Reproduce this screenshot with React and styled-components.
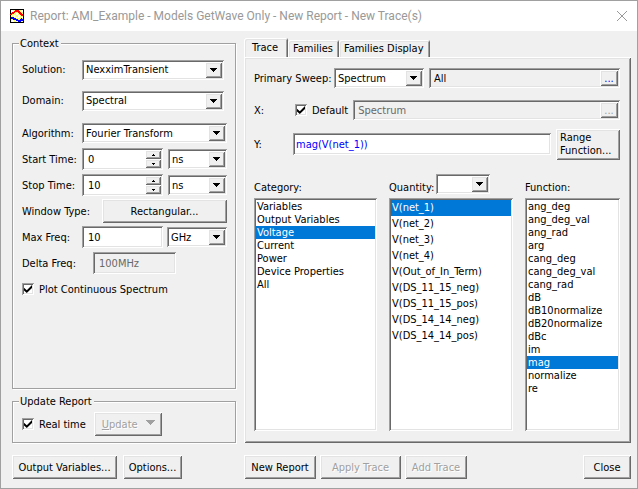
import React, { useState } from "react";
import styled, { createGlobalStyle, css } from "styled-components";

const FACE = "#f0f0f0";
const SHADOW = "#a0a0a0";
const DARK = "#696969";
const LIGHT = "#e3e3e3";

const sunken = css`
  box-shadow: inset 1px 1px ${SHADOW}, inset -1px -1px #fff,
    inset 2px 2px ${DARK}, inset -2px -2px ${LIGHT};
`;

const raised = css`
  box-shadow: inset 1px 1px #fff, inset -1px -1px ${DARK},
    inset 2px 2px ${LIGHT}, inset -2px -2px ${SHADOW};
`;

const GlobalStyle = createGlobalStyle`
  * {
    box-sizing: border-box;
  }
  body {
    margin: 0;
    background: ${FACE};
  }
  body, button, input, select {
    font-family: "DejaVu Sans Condensed", "DejaVu Sans", sans-serif;
    font-size: 11px;
    line-height: 13px;
    color: #000;
  }
`;

const Dialog = styled.div`
  display: flex;
  flex-direction: column;
  min-height: 100vh;
  border: 1px solid ${SHADOW};
  background: ${FACE};
  white-space: nowrap;
`;

const TitleBar = styled.header`
  display: flex;
  align-items: center;
  gap: 6px;
  height: 30px;
  padding: 0 9px;
  background: #fff;
`;

const Title = styled.h1`
  flex: 1;
  margin: 0;
  font-family: Roboto, sans-serif;
  font-size: 12px;
  font-weight: normal;
  line-height: 16px;
  color: #999;
`;

const CloseIcon = styled.button`
  display: flex;
  padding: 0;
  border: 0;
  background: none;
`;

const Body = styled.form`
  flex: 1;
  display: grid;
  grid-template-columns: 224px 1fr;
  grid-template-rows: 1fr auto;
  gap: 12px 8px;
  padding: 6px 6px 9px 11px;
`;

const Column = styled.div`
  display: flex;
  flex-direction: column;
  gap: 6px;
`;

const Group = styled.fieldset`
  flex: ${({ $grow }) => ($grow ? 1 : "none")};
  min-width: 0;
  margin: 0;
  padding: 4px 8px 6px 9px;
  border: 1px solid ${SHADOW};
  box-shadow: 1px 1px #fff, inset 1px 1px #fff;
`;

const Legend = styled.legend`
  margin-left: -3px;
  padding: 0 2px 0 1px;
  background: ${FACE};
`;

const FieldBlock = styled.div`
  & + & {
    margin-top: 4px;
  }
`;

const FieldRow = styled.div`
  display: flex;
  align-items: center;
  gap: 4px;
  height: ${({ $tall }) => ($tall ? 31 : 26)}px;
`;

const FieldLabel = styled.label`
  flex: none;
  width: ${({ $width }) => $width || 56}px;
  color: #000;
`;

const SelectBox = styled.span`
  display: grid;
  flex: ${({ $width }) => ($width ? "none" : 1)};
  width: ${({ $width }) => ($width ? `${$width}px` : "auto")};
  height: 20px;
  margin-right: ${({ $inset }) => $inset || 0}px;
  padding: 2px;
  background: #fff;
  ${sunken}
`;

const NativeSelect = styled.select`
  grid-area: 1 / 1;
  min-width: 0;
  padding: 0 16px 0 2px;
  border: 0;
  background: none;
  appearance: none;
`;

const Arrow = styled.span`
  grid-area: 1 / 1;
  justify-self: end;
  display: flex;
  align-items: center;
  justify-content: center;
  width: 17px;
  background: ${FACE};
  pointer-events: none;
  ${raised}
`;

const TextInput = styled.input`
  flex: ${({ $width }) => ($width ? "none" : 1)};
  width: ${({ $width }) => ($width ? `${$width}px` : "auto")};
  min-width: 0;
  height: 22px;
  padding: 2px 6px;
  border: 0;
  background: #fff;
  ${sunken}

  &:disabled {
    background: ${FACE};
    color: ${DARK};
  }
`;

const FormulaInput = styled(TextInput)`
  padding: 2px 3px;
  color: #00f;
`;

const SpinBox = styled.span`
  display: flex;
  width: 81px;
  height: 22px;
  margin-right: 1px;
  padding: 2px;
  background: #fff;
  ${sunken}
`;

const SpinInput = styled.input`
  flex: 1;
  min-width: 0;
  padding: 0 4px;
  border: 0;
  background: none;
`;

const SpinButtons = styled.span`
  display: flex;
  flex-direction: column;
  width: 16px;
`;

const SpinButton = styled.button`
  flex: 1;
  display: flex;
  align-items: center;
  justify-content: center;
  padding: 0;
  border: 0;
  background: ${FACE};
  ${raised}
`;

const Button = styled.button`
  flex: ${({ $grow }) => ($grow ? 1 : "none")};
  width: ${({ $width }) => ($width ? `${$width}px` : "auto")};
  min-height: 24px;
  padding: 0 4px;
  border: 0;
  background: ${FACE};
  ${raised}

  &:disabled {
    color: ${SHADOW};
    text-shadow: 1px 1px #fff;
  }
`;

const RangeButton = styled(Button)`
  height: 31px;
  padding: 0 4px;
  text-align: left;
  white-space: normal;
`;

const UpdateButton = styled(Button)`
  display: flex;
  align-items: center;
  justify-content: space-between;
  padding: 0 7px 0 8px;

  svg {
    margin-bottom: 4px;
  }
`;

const CheckLabel = styled.label`
  display: flex;
  align-items: center;
  gap: 5px;
`;

const Checkbox = styled.input`
  display: grid;
  place-content: center;
  width: 12px;
  height: 12px;
  margin: 0;
  background: #fff;
  appearance: none;
  ${sunken}

  &:checked::before {
    content: "";
    width: 8px;
    height: 8px;
    background: #000;
    clip-path: polygon(0 35%, 35% 65%, 100% 0, 100% 38%, 35% 100%, 0 70%);
  }
`;

const UpdateRow = styled.div`
  display: flex;
  align-items: center;
  gap: 8px;
`;

const TabArea = styled.div`
  display: flex;
  flex-direction: column;
  min-width: 0;
`;

const TabList = styled.div`
  display: flex;
  align-items: flex-end;
  height: 20px;
`;

const Tab = styled.button`
  height: ${({ $active }) => ($active ? 21 : 17)}px;
  margin-bottom: ${({ $active }) => ($active ? -2 : 0)}px;
  padding: ${({ $active }) => ($active ? "0 10px 3px 8px" : "0 6px 0 5px")};
  border: 0;
  border-radius: 2px 2px 0 0;
  background: ${FACE};
  box-shadow: inset 1px 1px #fff, inset -1px 0 ${DARK}, inset 2px 2px ${LIGHT},
    inset -2px 0 ${SHADOW};
`;

const TabPanel = styled.section`
  flex: 1;
  display: flex;
  flex-direction: column;
  padding: 5px 11px 12px 10px;
  ${raised}
`;

const TraceRow = styled.div`
  display: flex;
  align-items: center;
  gap: 5px;
  height: ${({ $tall }) => ($tall ? 36 : 32)}px;
`;

const SweepBox = styled.span`
  flex: 1;
  display: flex;
  align-items: center;
  height: 20px;
  padding: 2px;
  ${sunken}
`;

const SweepValue = styled.input`
  flex: 1;
  min-width: 0;
  padding: 0 3px;
  border: 0;
  background: none;

  &:disabled {
    color: ${DARK};
  }
`;

const MoreButton = styled.button`
  align-self: stretch;
  width: 18px;
  padding: 0;
  border: 0;
  background: ${FACE};
  color: #00f;
  ${raised}

  &:disabled {
    color: ${SHADOW};
  }
`;

const Lists = styled.div`
  flex: 1;
  display: grid;
  grid-template-columns: 123fr 124fr 95fr;
  gap: 12px;
  padding-top: 12px;
`;

const ListColumn = styled.div`
  display: flex;
  flex-direction: column;
  gap: 4px;
  min-width: 0;
`;

const ListHeader = styled.div`
  display: flex;
  align-items: flex-end;
  gap: 2px;
  height: 20px;
`;

const ListBox = styled.ul`
  flex: 1;
  margin: 0;
  padding: 2px;
  background: #fff;
  list-style: none;
  ${sunken}
`;

const ListItem = styled.li`
  padding-left: 1px;
  line-height: ${({ $height }) => $height}px;
  background: ${({ $selected }) => ($selected ? "#0078d7" : "transparent")};
  color: ${({ $selected }) => ($selected ? "#fff" : "#000")};
  cursor: default;
`;

const Footer = styled.footer`
  display: flex;
  gap: ${({ $gap }) => $gap}px;
`;

const Spacer = styled.span`
  flex: 1;
`;

const categories = [
  "Variables",
  "Output Variables",
  "Voltage",
  "Current",
  "Power",
  "Device Properties",
  "All",
];

const quantities = [
  "V(net_1)",
  "V(net_2)",
  "V(net_3)",
  "V(net_4)",
  "V(Out_of_In_Term)",
  "V(DS_11_15_neg)",
  "V(DS_11_15_pos)",
  "V(DS_14_14_neg)",
  "V(DS_14_14_pos)",
];

const functions = [
  "ang_deg",
  "ang_deg_val",
  "ang_rad",
  "arg",
  "cang_deg",
  "cang_deg_val",
  "cang_rad",
  "dB",
  "dB10normalize",
  "dB20normalize",
  "dBc",
  "im",
  "mag",
  "normalize",
  "re",
];

const ReportIcon = () => (
  <svg width="14" height="14" viewBox="0 0 14 14" shapeRendering="crispEdges" aria-hidden="true">
    <rect width="14" height="14" fill="#000" />
    <rect x="1" y="1" width="12" height="12" fill="#ff6" />
    <path d="M1 1h2v2h-2zM11 1h2v2h-2zM6 4h2v2h-2zM3 6h2v2h-2zM8 6h2v3h-2zM5 8h2v1h-2zM11 8h2v1h-2zM2 11h2v2h-2zM6 12h2v1h-2z" fill="#fff" />
    <path d="M1 4h1v-1h2v-1h1v-1h4v1h1v1h1v1h1v1h1v2h-2v-1h-1v-1h-1v-1h-1v-1h-3v1h-1v1h-2v1h-2z" fill="#f00" />
    <path d="M1 8h3v1h2v1h2v1h2v-1h1v-1h1v1h1v2h-2v1h-3v-1h-2v-1h-3v-1h-2z" fill="#00f" />
  </svg>
);

const Triangle = ({ size = 4, up, color = "#000" }) => (
  <svg
    width={size * 2 - 1}
    height={size}
    viewBox={`0 0 ${size * 2 - 1} ${size}`}
    shapeRendering="crispEdges"
    aria-hidden="true"
  >
    {Array.from({ length: size }, (_, i) => (
      <rect key={i} x={i} y={up ? size - 1 - i : i} width={(size - i) * 2 - 1} height="1" fill={color} />
    ))}
  </svg>
);

const Select = ({ id, label, options, width, inset }) => (
  <SelectBox $width={width} $inset={inset}>
    <NativeSelect id={id} aria-label={label}>
      {options.map((option) => (
        <option key={option}>{option}</option>
      ))}
    </NativeSelect>
    <Arrow>
      <Triangle />
    </Arrow>
  </SelectBox>
);

const Spinner = ({ id, initial }) => {
  const [value, setValue] = useState(initial);
  return (
    <SpinBox>
      <SpinInput id={id} value={value} onChange={(e) => setValue(Number(e.target.value) || 0)} />
      <SpinButtons>
        <SpinButton type="button" aria-label="Increase" onClick={() => setValue(value + 1)}>
          <Triangle size={2} up />
        </SpinButton>
        <SpinButton type="button" aria-label="Decrease" onClick={() => setValue(value - 1)}>
          <Triangle size={2} />
        </SpinButton>
      </SpinButtons>
    </SpinBox>
  );
};

const List = ({ label, items, initial, itemHeight = 13 }) => {
  const [selected, setSelected] = useState(initial);
  return (
    <ListBox role="listbox" aria-label={label} tabIndex={0}>
      {items.map((item) => (
        <ListItem
          key={item}
          role="option"
          aria-selected={item === selected}
          $selected={item === selected}
          $height={itemHeight}
          onClick={() => setSelected(item)}
        >
          {item}
        </ListItem>
      ))}
    </ListBox>
  );
};

const ContextGroup = () => (
  <Group $grow>
    <Legend>Context</Legend>
    <FieldBlock>
      <FieldRow $tall>
        <FieldLabel htmlFor="solution">Solution:</FieldLabel>
        <Select id="solution" options={["NexximTransient"]} inset={3} />
      </FieldRow>
      <FieldRow $tall>
        <FieldLabel htmlFor="domain">Domain:</FieldLabel>
        <Select id="domain" options={["Spectral", "Time"]} inset={3} />
      </FieldRow>
    </FieldBlock>
    <FieldBlock>
      <FieldRow>
        <FieldLabel htmlFor="algorithm">Algorithm:</FieldLabel>
        <Select id="algorithm" options={["Fourier Transform"]} />
      </FieldRow>
      <FieldRow>
        <FieldLabel htmlFor="start">Start Time:</FieldLabel>
        <Spinner id="start" initial={0} />
        <Select label="Start time unit" options={["ns", "us", "ms"]} />
      </FieldRow>
      <FieldRow>
        <FieldLabel htmlFor="stop">Stop Time:</FieldLabel>
        <Spinner id="stop" initial={10} />
        <Select label="Stop time unit" options={["ns", "us", "ms"]} />
      </FieldRow>
      <FieldRow>
        <FieldLabel as="span" $width={76}>Window Type:</FieldLabel>
        <Button type="button" $grow>Rectangular...</Button>
      </FieldRow>
      <FieldRow>
        <FieldLabel htmlFor="maxfreq">Max Freq:</FieldLabel>
        <TextInput id="maxfreq" defaultValue="10" $width={81} />
        <Select label="Max frequency unit" options={["GHz", "MHz", "kHz"]} />
      </FieldRow>
      <FieldRow>
        <FieldLabel htmlFor="deltafreq" $width={67}>Delta Freq:</FieldLabel>
        <TextInput id="deltafreq" defaultValue="100MHz" $width={83} disabled />
      </FieldRow>
      <FieldRow>
        <CheckLabel>
          <Checkbox type="checkbox" defaultChecked />
          Plot Continuous Spectrum
        </CheckLabel>
      </FieldRow>
    </FieldBlock>
  </Group>
);

const TracePanel = () => (
  <TabPanel role="tabpanel" aria-label="Trace">
    <TraceRow>
      <FieldLabel htmlFor="sweep" $width={75}>Primary Sweep:</FieldLabel>
      <Select id="sweep" options={["Spectrum"]} width={90} />
      <SweepBox>
        <SweepValue aria-label="Sweep values" defaultValue="All" />
        <MoreButton type="button" aria-label="Edit sweep">...</MoreButton>
      </SweepBox>
    </TraceRow>
    <TraceRow>
      <FieldLabel as="span" $width={36}>X:</FieldLabel>
      <CheckLabel>
        <Checkbox type="checkbox" defaultChecked />
        Default
      </CheckLabel>
      <SweepBox>
        <SweepValue aria-label="X" defaultValue="Spectrum" disabled />
        <MoreButton type="button" aria-label="Edit X" disabled>...</MoreButton>
      </SweepBox>
    </TraceRow>
    <TraceRow $tall>
      <FieldLabel htmlFor="formula" $width={34}>Y:</FieldLabel>
      <FormulaInput id="formula" defaultValue="mag(V(net_1))" />
      <RangeButton type="button" $width={64}>Range Function...</RangeButton>
    </TraceRow>
    <Lists>
      <ListColumn>
        <ListHeader>Category:</ListHeader>
        <List label="Category" items={categories} initial="Voltage" />
      </ListColumn>
      <ListColumn>
        <ListHeader>
          <label htmlFor="quantity">Quantity:</label>
          <Select id="quantity" options={[""]} width={54} />
        </ListHeader>
        <List label="Quantity" items={quantities} initial="V(net_1)" itemHeight={16} />
      </ListColumn>
      <ListColumn>
        <ListHeader>Function:</ListHeader>
        <List label="Function" items={functions} initial="mag" />
      </ListColumn>
    </Lists>
  </TabPanel>
);

const App = () => (
  <>
    <GlobalStyle />
    <Dialog role="dialog" aria-labelledby="title">
      <TitleBar>
        <ReportIcon />
        <Title id="title">Report: AMI_Example - Models GetWave Only - New Report - New Trace(s)</Title>
        <CloseIcon type="button" aria-label="Close window">
          <svg width="12" height="12" viewBox="0 0 12 12" stroke="#999" aria-hidden="true">
            <path d="M1 1l10 10M11 1L1 11" />
          </svg>
        </CloseIcon>
      </TitleBar>

      <Body onSubmit={(e) => e.preventDefault()}>
        <Column>
          <ContextGroup />
          <Group>
            <Legend>Update Report</Legend>
            <UpdateRow>
              <CheckLabel>
                <Checkbox type="checkbox" defaultChecked />
                Real time
              </CheckLabel>
              <UpdateButton type="button" $width={68} disabled>
                <span><u>U</u>pdate</span>
                <Triangle size={5} color={SHADOW} />
              </UpdateButton>
            </UpdateRow>
          </Group>
        </Column>

        <TabArea>
          <TabList role="tablist">
            <Tab type="button" role="tab" aria-selected="true" $active>Trace</Tab>
            <Tab type="button" role="tab" aria-selected="false">Families</Tab>
            <Tab type="button" role="tab" aria-selected="false">Families Display</Tab>
          </TabList>
          <TracePanel />
        </TabArea>

        <Footer $gap={6}>
          <Button type="button" $width={105}>Output Variables...</Button>
          <Button type="button" $width={59}>Options...</Button>
        </Footer>
        <Footer $gap={4}>
          <Button type="button" $width={72}>New Report</Button>
          <Button type="button" $width={81} disabled>Apply Trace</Button>
          <Button type="button" $width={62} disabled>Add Trace</Button>
          <Spacer />
          <Button type="button" $width={48}>Close</Button>
        </Footer>
      </Body>
    </Dialog>
  </>
);

export default App;
